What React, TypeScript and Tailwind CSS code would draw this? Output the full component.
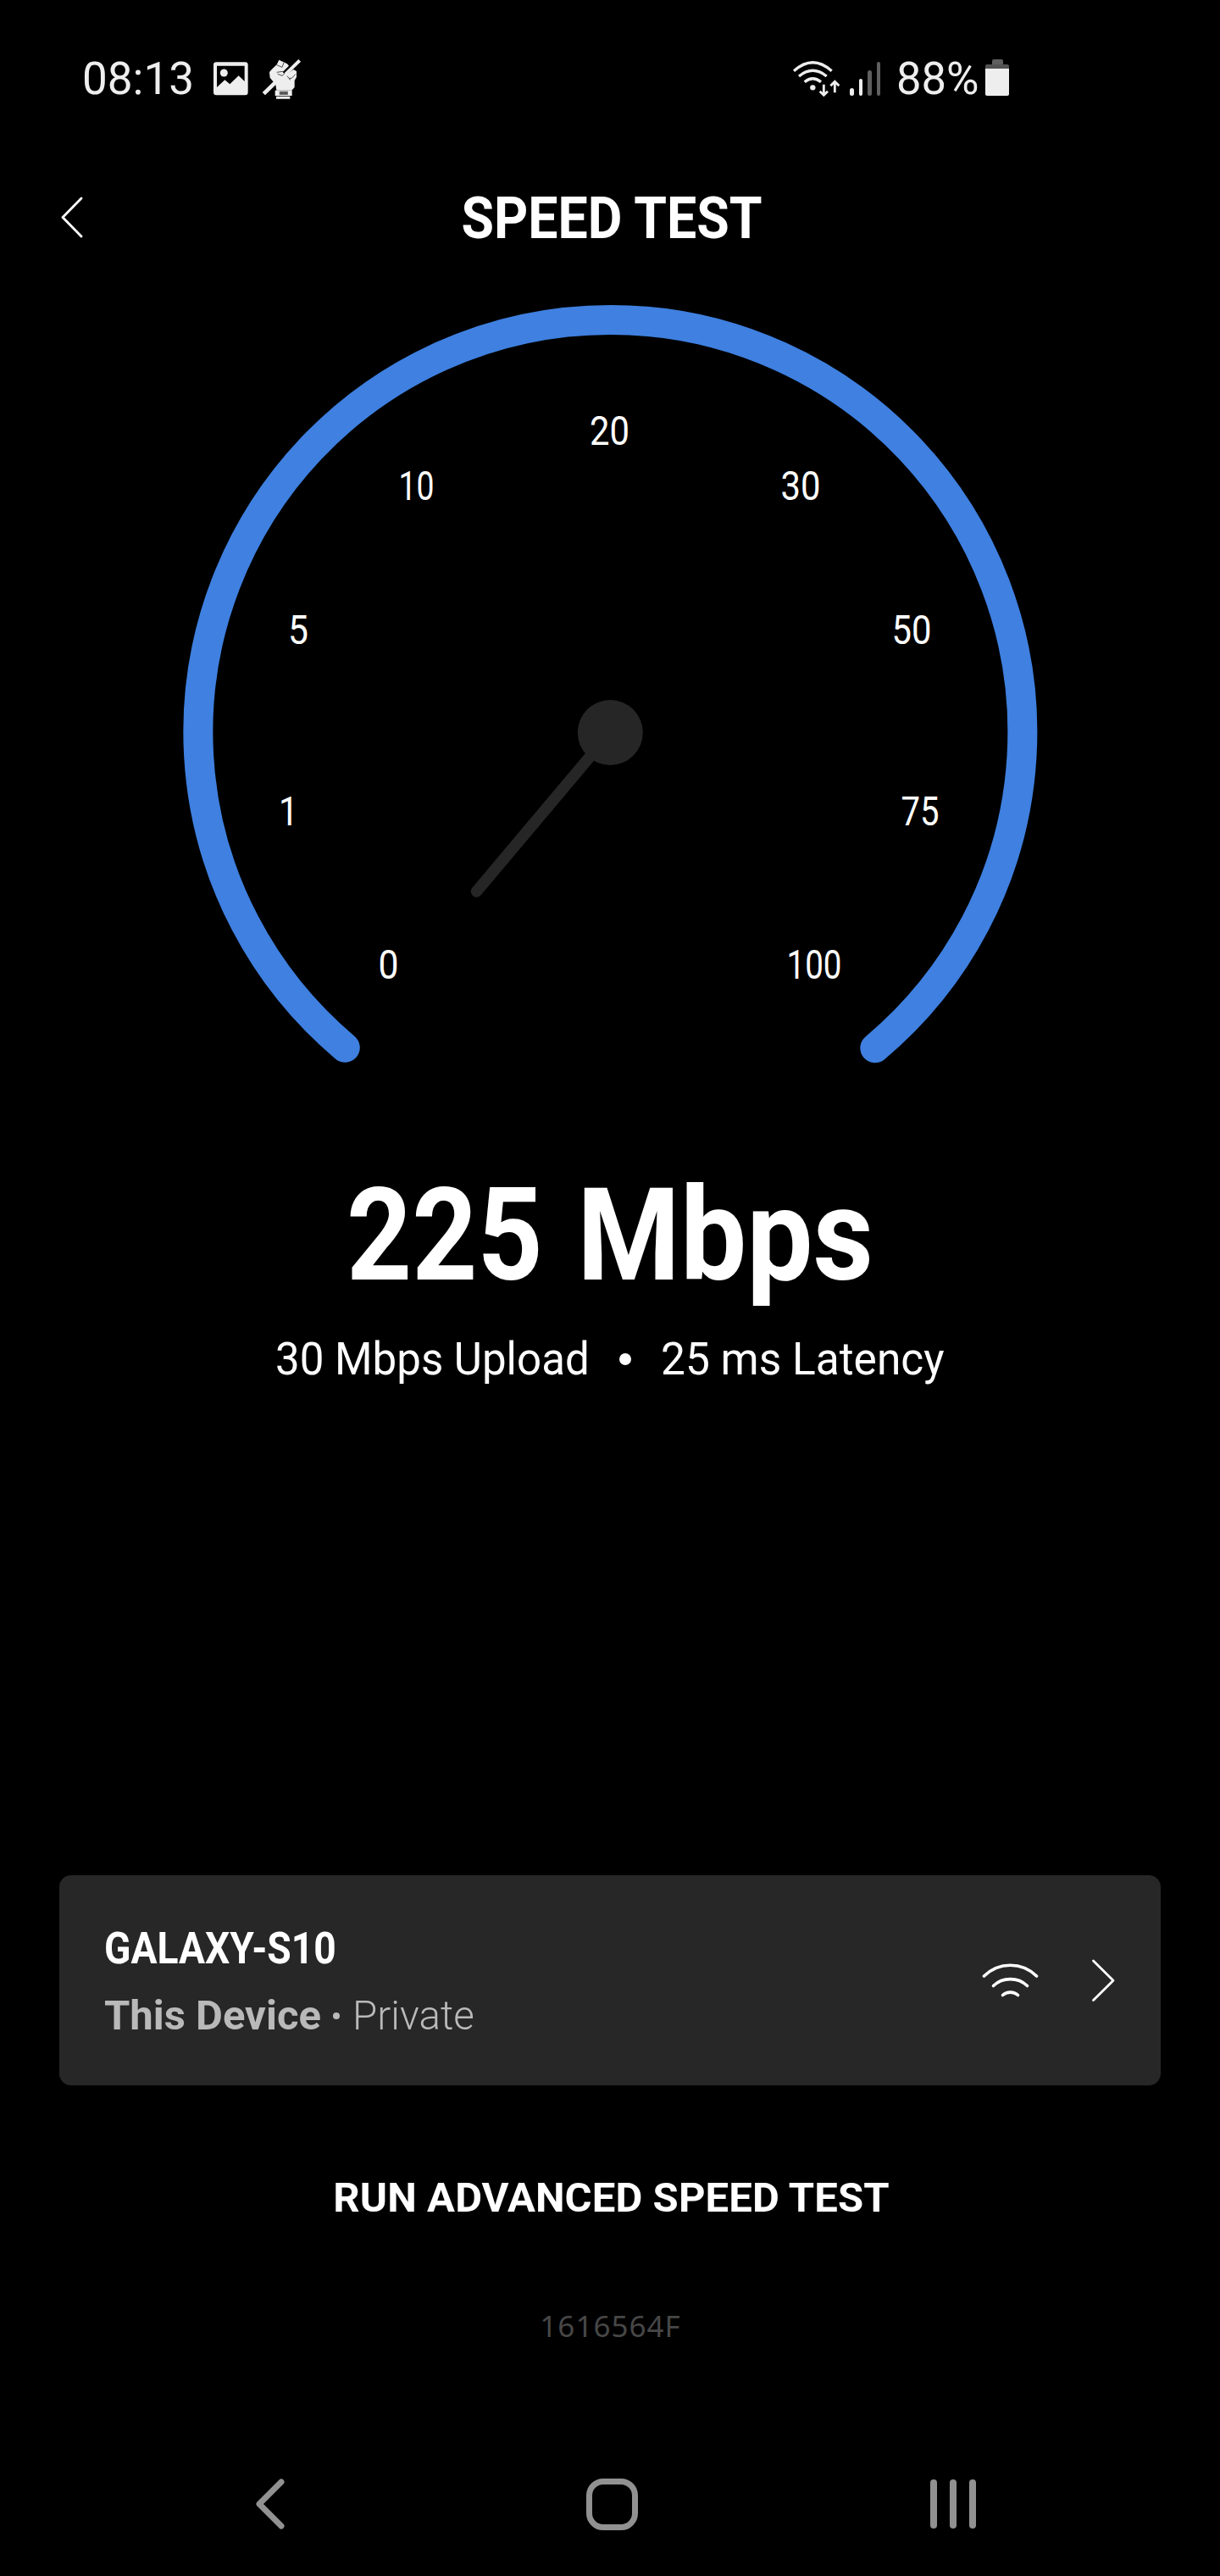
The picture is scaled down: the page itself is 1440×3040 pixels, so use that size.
import type { ReactNode } from "react";

interface Tick {
  label: string;
  x: number;
  y: number;
  width: number;
}

const ticks: Tick[] = [
  { label: "0", x: 458.5, y: 1155, width: 24 },
  { label: "1", x: 340.5, y: 974, width: 23 },
  { label: "5", x: 352, y: 760, width: 24 },
  { label: "10", x: 491.5, y: 590, width: 42 },
  { label: "20", x: 719.5, y: 525, width: 47 },
  { label: "30", x: 945, y: 590, width: 47 },
  { label: "50", x: 1076, y: 760, width: 47 },
  { label: "75", x: 1086, y: 974, width: 45 },
  { label: "100", x: 961, y: 1155, width: 65 },
];

function StatusBar() {
  return (
    <div className="flex h-[186px] items-center text-[#eeeeee]">
      <span className="ml-[97px] w-[155px] text-[53px] leading-[60px]">08:13</span>
      <PictureIcon />
      <FistIcon />
      <WifiDataIcon />
      <SignalIcon />
      <span className="ml-[19px] w-[105px] text-[53px] leading-[60px]">
        <span className="inline-block origin-left scale-x-[0.99]">88%</span>
      </span>
      <BatteryIcon />
    </div>
  );
}

function PictureIcon() {
  return (
    <svg className="h-[40px] w-[41px] shrink-0" viewBox="576 97 123 120">
      <path
        fill="currentColor"
        fillRule="evenodd"
        d="M586 98H688Q698 98 698 108V205Q698 215 688 215H586Q576 215 576 205V108Q576 98 586 98ZM588 111V187L616 161L634 176L665 146L686 166V111Z"
      />
      <circle cx="613" cy="136" r="13.5" fill="currentColor" />
    </svg>
  );
}

function FistIcon() {
  return (
    <svg className="ml-[16px] h-[50px] w-[47px] shrink-0" viewBox="750 79 141 150">
      <path d="M757 207L800 165" stroke="currentColor" strokeWidth="14" />
      <path
        d="M777 131Q778 127 803 104L811 87L840 101L846 108L824 130L838 138L862 121L873 127V148L866 160V184L856 195H802L799 174L779 150Z"
        fill="currentColor"
      />
      <path d="M834 138L884 89" stroke="currentColor" strokeWidth="12" />
      <path
        d="M803 105L822 113L828 97M803 131L824 128L830 136L822 143L806 137M840 144L846 152L856 152L870 137M846 154L852 158"
        fill="none"
        stroke="#000"
        strokeWidth="2"
      />
      <path d="M797 195H857V214H797ZM801 216H850V225H801Z" fill="currentColor" />
      <path d="M812 198H843V211H812Z" fill="#777" />
      <path d="M817 202H838V207H817Z" fill="none" stroke="#333" strokeWidth="2" />
    </svg>
  );
}

function WifiDataIcon() {
  return (
    <svg className="ml-[579px] h-[44px] w-[57px] shrink-0" viewBox="105 88 171 132">
      <g fill="none" stroke="currentColor" strokeWidth="10">
        <path d="M111 126Q178 66 245 126" />
        <path d="M129 145Q178 105 227 145" />
        <path d="M149 165Q178 141 207 165" />
      </g>
      <circle cx="178" cy="185" r="9.5" fill="currentColor" />
      <path d="M217 174V212M203 198L217 212L231 198M256 203V164M241 179L256 164L271 179" fill="none" stroke="currentColor" strokeWidth="8.5" />
    </svg>
  );
}

function SignalIcon() {
  return (
    <div className="ml-[11px] flex h-[40px] items-end gap-[6px]">
      <div className="h-[9px] w-[4.5px] rounded-full bg-[#eeeeee]" />
      <div className="h-[20px] w-[4.5px] rounded-full bg-[#eeeeee]" />
      <div className="h-[30px] w-[4.5px] rounded-full bg-[#5f5f5f]" />
      <div className="h-[40px] w-[4.5px] rounded-full bg-[#5f5f5f]" />
    </div>
  );
}

function BatteryIcon() {
  return (
    <div className="-mt-[3px] flex h-[43px] w-[28px] flex-col items-center">
      <div className="h-[6px] w-[13px] rounded-t-xs bg-[#5f5f5f]" />
      <div className="h-[5px] w-full rounded-t-xs bg-[#525252]" />
      <div className="w-full flex-1 rounded-b-xs bg-[#eeeeee]" />
    </div>
  );
}

function Header() {
  return (
    <header className="flex h-[142px] items-center text-white">
      <svg className="ml-[71px] h-[50px] w-[28px]" viewBox="0 0 28 50" fill="none">
        <path d="M25 2L3 24.5L25 47" stroke="currentColor" strokeWidth="2.8" strokeLinecap="round" strokeLinejoin="round" />
      </svg>
      <h1 className="mt-[2px] mr-[96px] flex-1 text-center text-[68px] leading-[80px] font-bold whitespace-nowrap">
        <span className="inline-block scale-x-[0.92]">SPEED TEST</span>
      </h1>
    </header>
  );
}

function Gauge() {
  return (
    <svg className="mx-auto mt-[22px] block h-[920px] w-[1040px]" viewBox="200 350 1040 920">
      <path
        d="M407.3 1236.3A486.5 486.5 0 1 1 1032.8 1236.8"
        fill="none"
        stroke="#3f80e0"
        strokeWidth="35"
        strokeLinecap="round"
      />
      {/* Needle resting at zero */}
      <path d="M720.3 864.5L562.5 1052" stroke="#262626" strokeWidth="13.5" strokeLinecap="round" />
      <circle cx="720.3" cy="864.5" r="38.5" fill="#262626" />
      {ticks.map((tick) => (
        <text
          key={tick.label}
          x={tick.x}
          y={tick.y}
          textAnchor="middle"
          textLength={tick.width}
          lengthAdjust="spacingAndGlyphs"
          className="fill-white text-[48px] font-normal"
        >
          {tick.label}
        </text>
      ))}
    </svg>
  );
}

function Results() {
  return (
    <section className="text-white">
      <p className="mt-[108px] flex pl-[409px] text-[153px] leading-[160px] font-bold whitespace-nowrap">
        <span className="w-[272px]">
          <span className="inline-block origin-left scale-x-[0.88]">225</span>
        </span>
        <span className="inline-block origin-left scale-x-[0.91]">Mbps</span>
      </p>
      <div className="mt-[34px] flex h-16 items-center pl-[325px] text-[54px] leading-[64px] font-normal whitespace-nowrap">
        <span className="w-[406px]">
          <span className="inline-block origin-left scale-x-[0.945]">30 Mbps Upload</span>
        </span>
        <span className="mr-[35px] size-[14px] rounded-full bg-white" />
        <span className="w-[340px]">
          <span className="inline-block origin-left scale-x-[0.953]">25 ms Latency</span>
        </span>
      </div>
    </section>
  );
}

function DeviceCard() {
  return (
    <section className="mx-[70px] mt-[577px] flex h-[248px] items-center rounded-[14px] bg-[#272727] pl-[53px] whitespace-nowrap">
      <div className="w-[1036px] pt-[6px]">
        <p className="text-[52px] leading-[78px] font-bold text-white">
          <span className="inline-block origin-left scale-x-[0.888]">GALAXY-S10</span>
        </p>
        <div className="flex items-center text-[49px] leading-[80px] text-[#b9b9b9]">
          <span className="w-[270px] font-bold">This Device</span>
          <span className="mr-[15px] size-[8px] rounded-full bg-[#b9b9b9]" />
          <span className="inline-block origin-left scale-x-[0.97] font-light">Private</span>
        </div>
      </div>
      <svg className="h-[42px] w-[67px]" viewBox="0 0 67 42" fill="none" stroke="#fff" strokeWidth="3.6" strokeLinecap="round">
        <path d="M2.5 16C20 -1 47 -1 64.5 16" />
        <path d="M13.5 27.5C24.5 17 42.5 17 53.5 27.5" />
        <path d="M24.5 38.5C29.5 34 37.5 34 42.5 38.5" />
      </svg>
      <svg className="ml-[62px] h-[52px] w-[28px]" viewBox="0 0 28 52" fill="none">
        <path d="M2.5 3L26 26.2L2.5 49.5" stroke="#fff" strokeWidth="2.8" strokeLinecap="round" strokeLinejoin="round" />
      </svg>
    </section>
  );
}

function NavBar() {
  return (
    <nav className="mt-auto flex h-[170px] items-center text-[#919191]">
      <svg className="ml-[299px] h-[60px] w-[40px]" viewBox="0 0 40 60" fill="none">
        <path d="M33 4L7 30L33 56" stroke="currentColor" strokeWidth="7" strokeLinecap="round" strokeLinejoin="round" />
      </svg>
      <div className="ml-[353px] size-[61px] rounded-[20px] border-[7.5px] border-[#919191]" />
      <div className="ml-[345px] flex gap-[15px]">
        <RecentBar />
        <RecentBar />
        <RecentBar />
      </div>
    </nav>
  );
}

function RecentBar(): ReactNode {
  return <span className="h-[58px] w-[8px] rounded-full bg-[#919191]" />;
}

export default function App() {
  return (
    <main className="flex h-[3040px] w-[1440px] flex-col overflow-hidden bg-black font-['Roboto','Liberation_Sans',sans-serif]">
      <StatusBar />
      <Header />
      <Gauge />
      <Results />
      <DeviceCard />
      <button className="mt-[103px] pl-[3px] text-center text-[49px] leading-[60px] font-bold tracking-[0.1px] whitespace-nowrap text-white">
        RUN ADVANCED SPEED TEST
      </button>
      <p className="mt-[101px] pl-[1px] text-center font-['Noto_Sans',sans-serif] text-[35px] leading-[40px] tracking-[1px] text-[#474747]">
        1616564F
      </p>
      <NavBar />
    </main>
  );
}
